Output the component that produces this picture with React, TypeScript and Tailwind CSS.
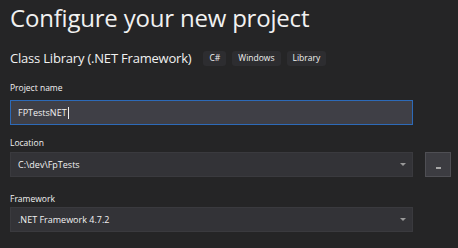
import React from 'react';

const Tag = ({ label }: { label: string }) => (
  <span className="inline-flex h-[15px] items-center rounded-[3px] bg-[#2d2d30] px-[6px] text-[8.5px] font-medium leading-none text-[#f1f1f1]">
    {label}
  </span>
);

const Caret = () => (
  <svg width="6" height="4" viewBox="0 0 6 4" className="mr-[4px]">
    <path d="M0 0 L6 0 L3 3 Z" fill="#999999" />
  </svg>
);

const Select = ({ value }: { value: string }) => (
  <div className="flex h-[25px] w-[403px] items-center justify-between border border-[#3a3a3e] bg-[#333337] pl-[7px] pr-[2px] text-[9px] text-[#f1f1f1]">
    <span>{value}</span>
    <Caret />
  </div>
);

export default function App() {
  return (
    <div
      className="h-[248px] w-[458px] overflow-hidden bg-[#252526] pl-[10px] text-[#f1f1f1]"
      style={{ fontFamily: '"Open Sans", "Noto Sans", sans-serif' }}
    >
      <h1 className="pt-[2px] text-[24px] leading-[32px] tracking-[-0.2px]">Configure your new project</h1>

      <div className="mt-[15px] flex items-center gap-[6px]">
        <h2 className="mr-[6px] text-[13px] font-medium leading-[18px] tracking-[-0.2px]">Class Library (.NET Framework)</h2>
        <Tag label="C#" />
        <Tag label="Windows" />
        <Tag label="Library" />
      </div>

      <label className="mt-[15px] block text-[8.5px] font-medium leading-[12px]">Project name</label>
      <div className="mt-[6px] flex h-[25px] w-[403px] items-center border border-[#2d6ab8] bg-[#3f3f46] pl-[7px] text-[9px]">
        <span>FPTestsNET</span>
        <span className="ml-[1px] h-[12px] w-px bg-[#f1f1f1]" />
      </div>

      <label className="mt-[12px] block text-[8.5px] font-medium leading-[12px]">Location</label>
      <div className="mt-[3px] flex items-center gap-[12px]">
        <Select value="C:\dev\FpTests" />
        <button className="flex h-[25px] w-[26px] items-end justify-center border border-[#4f4f54] bg-[#3c3c41] pb-[7px]">
          <span className="block h-[2px] w-[5px] bg-[#a8a8a8]" />
        </button>
      </div>

      <label className="mt-[16px] block text-[8.5px] font-medium leading-[12px]">Framework</label>
      <div className="mt-[2px]">
        <Select value=".NET Framework 4.7.2" />
      </div>
    </div>
  );
}
